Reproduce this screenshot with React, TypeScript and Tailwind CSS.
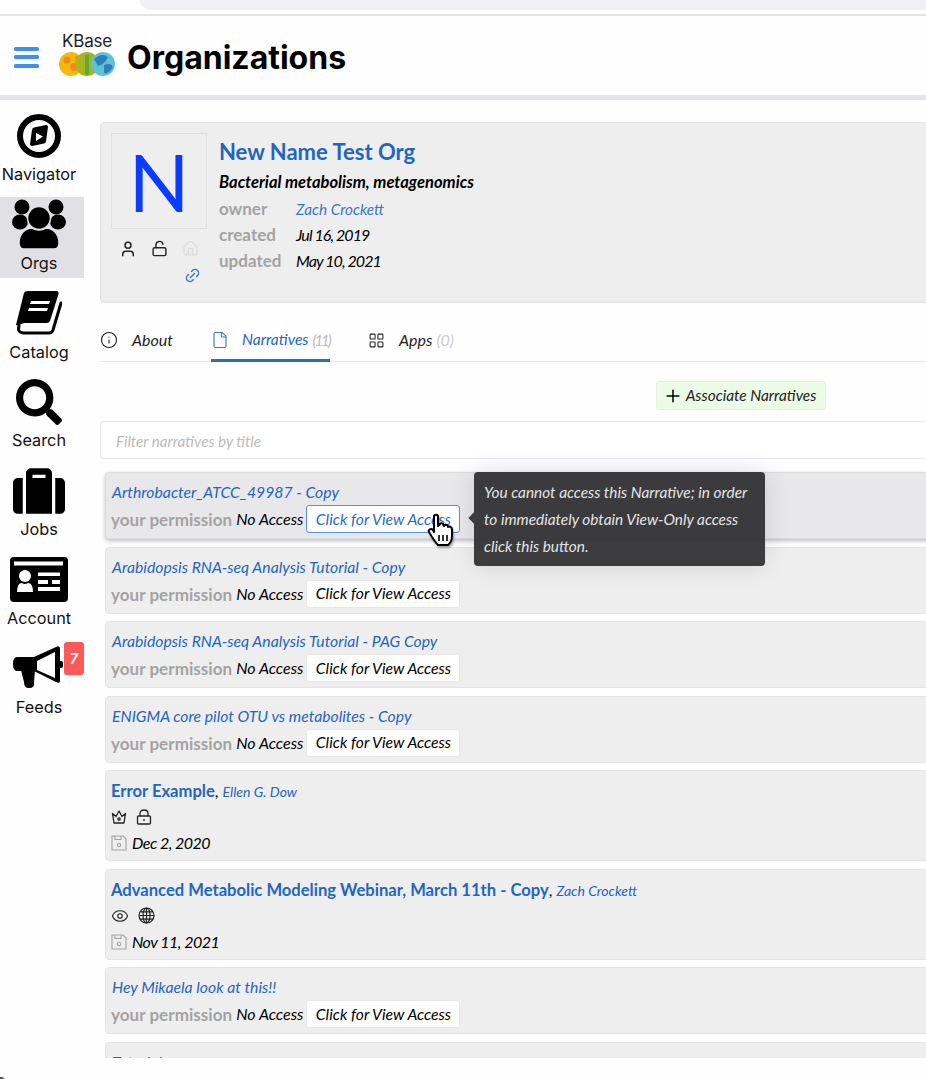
import React from 'react';
import { Eye, File, Home, Info, LayoutGrid, Link2, LockOpen, Plus, User } from 'lucide-react';
import { FaSearch, FaSuitcase } from 'react-icons/fa';

const oxygen = "font-['Lato','Open_Sans',sans-serif]";

function NavigatorIcon() {
  return (
    <svg viewBox="0 0 44 44" className="h-[44px] w-[44px]">
      <circle cx="22" cy="22" r="19" fill="none" stroke="#000" strokeWidth="6" />
      <path d="M15 16 Q15 14 17 13.5 L29 11 Q31 11 31 13 L29 27 Q29 29 27 29.5 L15 32 Q13 32 13 30 Z" fill="#000" />
      <path d="M19 19 L26 22.5 L19 27 Z" fill="#fff" />
    </svg>
  );
}

function OrgsIcon() {
  return (
    <svg viewBox="0 0 54 50" className="h-[50px] w-[54px]">
      <circle cx="10" cy="8" r="7.5" fill="#000" />
      <circle cx="44" cy="8" r="7.5" fill="#000" />
      <ellipse cx="8" cy="23" rx="8" ry="7.5" fill="#000" />
      <ellipse cx="46" cy="23" rx="8" ry="7.5" fill="#000" />
      <path
        d="M7 44 C7 34 14 29 20 29 Q27 33 34 29 C40 29 47 34 47 44 Q47 50 42 50 H12 Q7 50 7 44 Z"
        fill="#000"
        stroke="#e1e1e5"
        strokeWidth="1.5"
      />
      <circle cx="27" cy="19" r="11.5" fill="#000" stroke="#e1e1e5" strokeWidth="1.5" />
    </svg>
  );
}

function BookIcon() {
  return (
    <svg viewBox="0 0 46 44" className="h-[44px] w-[46px]">
      <path d="M8 2 Q9 0 12 0 H40 Q43 0 42.5 3 L34 30 Q33 32 31 32 H9 Q5 32 3 35 L0 34 Z" fill="#000" />
      <path d="M15 10 H34 L33 13 H14 Z M13 17 H32 L31 20 H12 Z" fill="#fff" />
      <path d="M3 35 Q1 42 8 42 H33 Q36 42 37 39 L45 12" fill="none" stroke="#000" strokeWidth="3" strokeLinecap="round" />
    </svg>
  );
}

function AccountIcon() {
  return (
    <svg viewBox="0 0 58 45" className="h-[45px] w-[58px]">
      <rect x="0" y="0" width="58" height="45" rx="4" fill="#000" />
      <rect x="4" y="4.5" width="49" height="4" fill="#fff" />
      <circle cx="15" cy="19" r="6" fill="#fff" />
      <path d="M7 35 Q7 26 12 26 Q15 28 18 26 Q23 26 23 35 Z" fill="#fff" />
      <path d="M28 15.5 H50 V19 H28 Z M28 23 H38 V27 H28 Z M42 23 H50 V27 H42 Z M28 30 H50 V34 H28 Z" fill="#fff" />
    </svg>
  );
}

function FeedsIcon() {
  return (
    <svg viewBox="0 0 52 44" className="h-[44px] w-[52px]">
      <path d="M4 11 H21 L43 1 Q47 -1 47 3 V35 Q47 38 43 36 L21 25 H4 Q0 25 0 18 Q0 11 4 11 Z" fill="#000" />
      <path d="M24 15 L42 6 V32 L24 24 Z" fill="#fff" />
      <path d="M8 24 H22 L21 36 Q22 42 16 42 Q11 42 11 36 Z" fill="#000" />
      <rect x="46" y="15" width="4" height="7" rx="2" fill="#000" />
    </svg>
  );
}

function CrownIcon() {
  return (
    <svg viewBox="0 0 16 16" className="h-[16px] w-[16px]" fill="none" stroke="currentColor" strokeWidth="1.3" strokeLinejoin="round">
      <path d="M1.5 4.5 L5 7.5 L8 2 L11 7.5 L14.5 4.5 L13 14 H3 Z" />
      <circle cx="8" cy="10" r="1.2" />
    </svg>
  );
}

function LockIcon() {
  return (
    <svg viewBox="0 0 16 16" className="h-[16px] w-[16px]" fill="none" stroke="currentColor" strokeWidth="1.3">
      <rect x="1.5" y="7" width="13" height="8" rx="1" />
      <path d="M4 7 V4.5 Q4 1 8 1 Q12 1 12 4.5 V7 M8 10 V12" />
    </svg>
  );
}

function GlobeIcon() {
  return (
    <svg viewBox="0 0 17 17" className="h-[17px] w-[17px]" fill="none" stroke="currentColor" strokeWidth="1.2">
      <circle cx="8.5" cy="8.5" r="7.5" />
      <ellipse cx="8.5" cy="8.5" rx="3.5" ry="7.5" />
      <path d="M8.5 1 V16 M1 8.5 H16 M2 4.8 H15 M2 12.2 H15" />
    </svg>
  );
}

function FloppyIcon() {
  return (
    <svg viewBox="0 0 16 16" className="h-[16px] w-[16px] text-[#a3a3a3]" fill="none" stroke="currentColor" strokeWidth="1.1">
      <path d="M1 1 H12 L15 4 V15 H1 Z" />
      <path d="M4 1 V4.5 H10 V1" />
      <circle cx="8" cy="10" r="1.7" />
    </svg>
  );
}

function Hamburger() {
  return (
    <svg viewBox="0 0 25 21" className="h-[21px] w-[25px]">
      <rect x="0" y="0" width="25" height="4" rx="1.5" fill="#3b91ec" />
      <rect x="0" y="8" width="25" height="4" rx="1.5" fill="#3b91ec" />
      <rect x="0" y="17" width="25" height="4" rx="1.5" fill="#3b91ec" />
    </svg>
  );
}

function NavItem({ icon, label, active, badge }: { icon: React.ReactNode; label: string; active?: boolean; badge?: string }) {
  return (
    <div className={`relative h-[81px] w-[84px] ${active ? 'bg-[#e1e1e5]' : ''}`}>
      <div className="flex w-[78px] flex-col items-center">
        <div className="flex h-[55px] items-center justify-center text-black">{icon}</div>
        <div className="font-['Inter',sans-serif] text-[16.3px] leading-[22px] text-[#111]">{label}</div>
      </div>
      {badge && (
        <div className="absolute top-[1px] right-0 flex h-[33px] w-[20px] items-center justify-center rounded-[3px] bg-[#fc5a5a] text-[16px] font-bold italic text-white">
          {badge}
        </div>
      )}
    </div>
  );
}

function Logo() {
  return (
    <div className="flex w-[58px] flex-col items-center">
      <div className="font-['Inter',sans-serif] text-[17px] leading-[18px] tracking-[-0.2px] text-[#222]">KBase</div>
      <svg viewBox="0 0 58 26" className="mt-[1px] h-[26px] w-[58px]">
        <circle cx="13" cy="13" r="12" fill="#f5b80e" />
        <circle cx="9" cy="9" r="3.5" fill="#f08a1d" />
        <circle cx="16" cy="16" r="4" fill="#f08a1d" />
        <circle cx="19" cy="7" r="2" fill="#f08a1d" />
        <circle cx="29" cy="13" r="12" fill="#a9b41e" />
        <path d="M27 4 L31 4 L31 24 L27 24 Z" fill="#5fa83a" />
        <circle cx="45" cy="13" r="12" fill="#5ec3d6" />
        <path d="M36 8 Q44 1 50 6 Q46 14 40 15 Z" fill="#2f7fb8" />
        <path d="M46 14 Q53 11 55 16 Q50 24 46 22 Z" fill="#2f7fb8" />
      </svg>
    </div>
  );
}

function HandCursor() {
  return (
    <svg viewBox="0 0 28 34" className="absolute top-[513px] left-[427px] h-[34px] w-[28px] drop-shadow-[1px_2px_1px_rgba(0,0,0,0.35)]">
      <path
        d="M7 3.5 C7 1 11 1 11 3.5 V13 L12.5 12 C13 9.5 16.5 10 16.5 12.5 L17 13 C18 11 21 11.5 21 14 C22.5 13 25 14 25 16.5 V23 C25 27 23 31 21 32 H11 C9 30 7 27 5 24 L2 19 C1 16.5 4 15 6 17 L7 19 Z"
        fill="#fff"
        stroke="#000"
        strokeWidth="2"
        strokeLinejoin="round"
      />
      <path d="M12 22 V28 M16 22 V28 M20 22 V28" stroke="#000" strokeWidth="1.6" />
    </svg>
  );
}

function AccessRow({ hover }: { hover?: boolean }) {
  return (
    <div className="mt-[2px] flex items-center">
      <span className="pt-[2px] text-[17px] font-bold tracking-[0.05px] text-[#a3a3a3]">your permission</span>
      <span className="ml-[4px] text-[16px] italic text-black">No Access</span>
      <span
        className={`ml-[3px] flex h-[28px] w-[154px] items-center justify-center rounded-[3px] border bg-white pt-[1px] text-[15.7px] italic ${
          hover ? 'border-[#5b8fd6] text-[#2b6cc4]' : 'border-[#e8e8e8] text-black'
        }`}
      >
        Click for View Access
      </span>
    </div>
  );
}

function NoAccessCard({ title, hover }: { title: string; hover?: boolean }) {
  return (
    <div
      className={`h-[67px] shrink-0 rounded-[4px] border pt-[8px] pl-[5px] ${
        hover ? 'border-[#dcdcdf] bg-[#e8e8ea] shadow-[0_2px_4px_rgba(0,0,0,0.25)]' : 'border-[#e3e3e3] bg-[#eeeeee]'
      }`}
    >
      <div className="pl-[1px] text-[15.75px] leading-[22px] italic text-[#1f66bf]">{title}</div>
      <AccessRow hover={hover} />
    </div>
  );
}

function OwnedCard({ title, owner, icons, date }: { title: string; owner: string; icons: React.ReactNode; date: string }) {
  return (
    <div className="h-[91px] shrink-0 rounded-[4px] border border-[#e3e3e3] bg-[#eeeeee] pt-[8px] pl-[5px]">
      <div className="leading-[24px] text-[#1f66bf]">
        <span className="text-[16.6px] font-bold">{title}</span>
        <span className="text-[16px] text-black">, </span>
        <span className="text-[14px] italic">{owner}</span>
      </div>
      <div className="flex h-[26px] items-center gap-[9px] text-[#222]">{icons}</div>
      <div className="flex h-[26px] items-center gap-[5px]">
        <FloppyIcon />
        <span className="text-[16px] tracking-[-0.5px] italic text-black">{date}</span>
      </div>
    </div>
  );
}

export default function App() {
  return (
    <div className={`relative h-[1079px] w-[926px] overflow-hidden bg-[#fefefe] ${oxygen}`}>
      <div className="h-[16px] border-b-2 border-[#e5e5e8] bg-white">
        <div className="ml-[140px] h-[10px] rounded-bl-[12px] bg-[#f0f0f4]" />
      </div>

      <header className="flex h-[79px] items-center">
        <div className="mt-[4px] ml-[14px]">
          <Hamburger />
        </div>
        <div className="ml-[19px] -mt-[2px]">
          <Logo />
        </div>
        <h1 className="mt-[4px] ml-[11px] font-['Inter',sans-serif] text-[32px] font-bold text-black">Organizations</h1>
      </header>
      <div className="h-[5px] bg-[#e3e3e8]" />

      <div className="flex h-[958px] overflow-hidden">
        <nav className="flex w-[84px] shrink-0 flex-col gap-[7.8px] pt-[8px]">
          <NavItem icon={<NavigatorIcon />} label="Navigator" />
          <NavItem active icon={<OrgsIcon />} label="Orgs" />
          <NavItem icon={<BookIcon />} label="Catalog" />
          <NavItem icon={<FaSearch size={46} />} label="Search" />
          <NavItem icon={<FaSuitcase size={52} />} label="Jobs" />
          <NavItem icon={<AccountIcon />} label="Account" />
          <NavItem icon={<FeedsIcon />} label="Feeds" badge="7" />
        </nav>

        <main className="ml-[16px] w-[900px] shrink-0 pt-[22px]">
          <section className="flex h-[181px] rounded-[4px] border border-[#e3e3e3] bg-[#eeeeee] pt-[10px] pl-[10px]">
            <div className="w-[96px]">
              <div className="flex h-[96px] w-[96px] items-center justify-center border border-[#e0e0e0] text-[80px] leading-none text-[#0a3cff]">
                N
              </div>
              <div className="mt-[11px] flex justify-between px-[8px]">
                <User size={18} className="text-[#222]" />
                <LockOpen size={17} className="text-[#222]" />
                <Home size={17} className="text-[#dddddd]" />
              </div>
              <div className="mt-[9px] flex justify-end pr-[6px]">
                <Link2 size={17} className="-rotate-45 text-[#3a78c9]" />
              </div>
            </div>
            <div className="ml-[12px] pt-[1px]">
              <div className="text-[22px] leading-[36px] font-bold text-[#1f66bf]">New Name Test Org</div>
              <div className="text-[16.5px] leading-[24px] font-bold italic text-black">Bacterial metabolism, metagenomics</div>
              <div className="mt-[2px] flex h-[26px] items-center">
                <span className="w-[77px] text-[17px] font-bold text-[#a3a3a3]">owner</span>
                <span className="text-[15.3px] italic text-[#3a78c9]">Zach Crockett</span>
              </div>
              <div className="flex h-[26px] items-center">
                <span className="w-[77px] text-[17px] font-bold text-[#a3a3a3]">created</span>
                <span className="text-[16px] tracking-[-0.9px] italic text-black">Jul 16, 2019</span>
              </div>
              <div className="flex h-[26px] items-center">
                <span className="w-[77px] text-[17px] font-bold text-[#a3a3a3]">updated</span>
                <span className="text-[16px] tracking-[-0.9px] italic text-black">May 10, 2021</span>
              </div>
            </div>
          </section>

          <div className="mt-[18px] flex h-[41px] items-start border-b border-[#e8e8f0] text-[16px] italic">
            <div className="flex h-[41px] items-center pb-[3px]">
              <Info size={18} strokeWidth={1.5} className="shrink-0 text-[#222]" />
              <span className="ml-[14px] text-[#222]">About</span>
            </div>
            <div className="ml-[38px] flex h-[41px] w-[119px] items-center border-b-[3px] border-[#2b6cc4]">
              <File size={18} strokeWidth={1.5} className="shrink-0 text-[#3a78c9]" />
              <span className="ml-[13px] text-[15.5px] text-[#1f66bf]">Narratives</span>
              <span className="ml-[4px] text-[15px] tracking-[-2px] text-[#bbbbbb]">(11)</span>
            </div>
            <div className="ml-[38px] flex h-[41px] items-center pb-[3px]">
              <LayoutGrid size={17} strokeWidth={1.5} className="shrink-0 text-[#222]" />
              <span className="ml-[14px] text-[#222]">Apps</span>
              <span className="ml-[4px] text-[#cccccc]">(0)</span>
            </div>
          </div>

          <div className="flex h-[59px] items-start pt-[19px] pl-[556px]">
            <div className="flex h-[29px] w-[170px] items-center justify-center gap-[3px] rounded-[3px] border border-[#e2f2dc] bg-[#ebfbe6] pt-[1px] pr-[3px] text-[15.4px] italic text-[#222]">
              <Plus size={20} strokeWidth={1.8} className="shrink-0 text-black" />
              Associate Narratives
            </div>
          </div>

          <div className="flex h-[38px] items-center rounded-[4px] border border-[#e8e8f0] bg-white pt-[3px] pl-[15px] text-[15.2px] italic text-[#bbbbbb]">
            Filter narratives by title
          </div>

          <div className="mt-[13px] ml-[5px] flex flex-col gap-[7.5px]">
            <NoAccessCard hover title="Arthrobacter_ATCC_49987 - Copy" />
            <NoAccessCard title="Arabidopsis RNA-seq Analysis Tutorial - Copy" />
            <NoAccessCard title="Arabidopsis RNA-seq Analysis Tutorial - PAG Copy" />
            <NoAccessCard title="ENIGMA core pilot OTU vs metabolites - Copy" />
            <OwnedCard
              title="Error Example"
              owner="Ellen G. Dow"
              date="Dec 2, 2020"
              icons={
                <>
                  <CrownIcon />
                  <LockIcon />
                </>
              }
            />
            <OwnedCard
              title="Advanced Metabolic Modeling Webinar, March 11th - Copy"
              owner="Zach Crockett"
              date="Nov 11, 2021"
              icons={
                <>
                  <Eye size={18} strokeWidth={1.5} />
                  <GlobeIcon />
                </>
              }
            />
            <NoAccessCard title="Hey Mikaela look at this!!" />
            <div className="h-[30px] shrink-0 rounded-[4px] border border-[#e3e3e3] bg-[#eeeeee] pt-[8px] pl-[6px] text-[15.75px] leading-[22px] italic text-[#1f66bf]">
              Tutorial
            </div>
          </div>
        </main>
      </div>

      <div className="absolute top-[472px] left-[474px] h-[94px] w-[291px] rounded-[4px] bg-[rgba(52,52,54,0.96)] pt-[7px] pl-[10px] text-[15.4px] leading-[27px] text-[#e4e4e4] italic shadow-[0_0_24px_rgba(0,0,0,0.12)]">
        <div className="absolute top-[42px] left-[-4px] h-[8px] w-[8px] rotate-45 bg-[#3c3c3e]" />
        You cannot access this Narrative; in order
        <br />
        to immediately obtain View-Only access
        <br />
        click this button.
      </div>
      <HandCursor />
      <div className="absolute bottom-0 left-0 h-[2px] w-[4px] rounded-tr-[2px] bg-[#555]" />
    </div>
  );
}
